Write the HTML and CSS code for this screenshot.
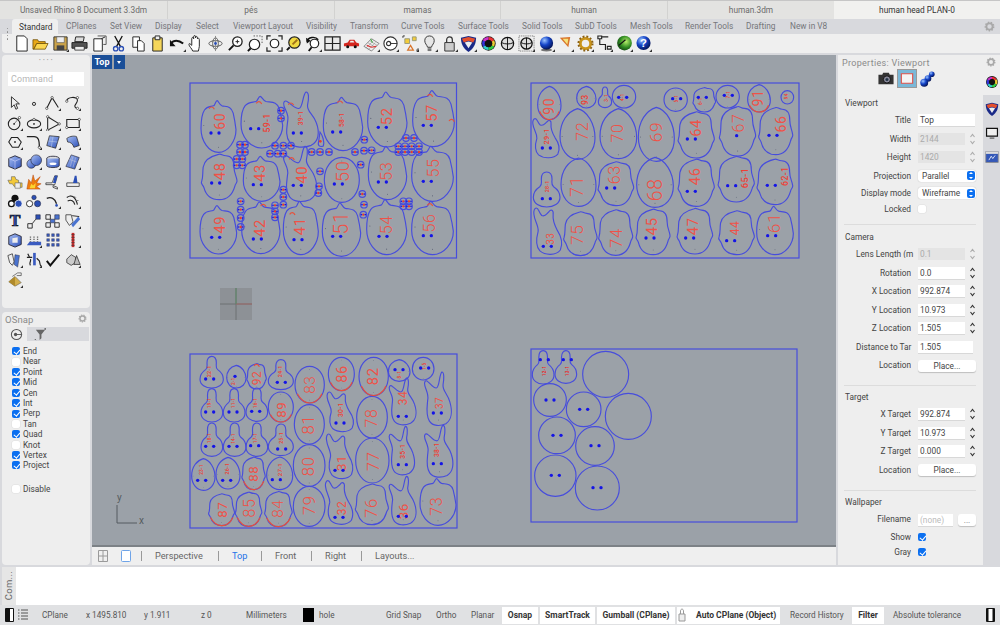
FILE: index.html
```html
<!DOCTYPE html>
<html lang="en">
<head>
<meta charset="utf-8">
<title>Rhino</title>
<link rel="stylesheet" href="styles.css">
</head>
<body>
<svg class="defs" width="0" height="0">
<defs>
<path id="fl" d="M18 15v3h-3z" fill="#333"/>
<g id="gear"><circle cx="6" cy="6" r="3.4" fill="none" stroke="#a9a9a9" stroke-width="2"/><circle cx="6" cy="6" r="4.6" fill="none" stroke="#a9a9a9" stroke-width="1.6" stroke-dasharray="1.6 1.6"/></g>
<g id="step"><path d="M1.5 4 3.5 1.5 5.5 4M1.5 8 3.5 10.5 5.5 8" fill="none" stroke="#333" stroke-width="1.1"/></g>
<g id="wheel" fill="none" stroke-width="2.8"><circle cx="9" cy="9" r="7.6" fill="#111" stroke="none"/><path d="M9 3.5a5.5 5.5 0 0 1 4.8 2.8" stroke="#e33"/><path d="M13.8 6.3a5.5 5.5 0 0 1 0 5.4" stroke="#ec3"/><path d="M13.8 11.700a5.500 5.500 0 0 1-4.800 2.800" stroke="#3c4"/><path d="M9 14.500a5.500 5.500 0 0 1-4.800-2.800" stroke="#3cc"/><path d="M4.200 11.700a5.500 5.500 0 0 1 0-5.400" stroke="#33d"/><path d="M4.200 6.300a5.500 5.500 0 0 1 4.800-2.800" stroke="#c3c"/></g>
<radialGradient id="bs" cx=".35" cy=".3" r=".8"><stop offset="0" stop-color="#9cc4ff"/><stop offset=".45" stop-color="#1444c8"/><stop offset="1" stop-color="#020a40"/></radialGradient>
<radialGradient id="gs" cx=".6" cy=".4" r=".8"><stop offset="0" stop-color="#b6ef6a"/><stop offset=".5" stop-color="#2f8a22"/><stop offset="1" stop-color="#06200a"/></radialGradient>
<linearGradient id="bl" x1="0" y1="0" x2="1" y2="1"><stop offset="0" stop-color="#a9c0f5"/><stop offset="1" stop-color="#2c50b8"/></linearGradient>

<g id="h1"><path class="o" d="M36 10C40 9 42 0 46 0C50 0 52 8 60 10C74 12 86 10 92 24C96 36 98 44 100 56C100 78 78 100 50 100C22 100 0 78 0 54C0 40 2 26 10 18C18 10 28 12 36 10Z"/><ellipse class="p" cx="50" cy="90" rx="1.200" ry="1"/><ellipse class="p" cx="8" cy="48" rx="1.200" ry="1"/></g>
<g id="h2"><path class="o" d="M50 0C78 4 100 30 100 58C100 82 78 100 50 100C22 100 0 80 0 55C0 25 22 6 50 0Z"/><ellipse class="p" cx="50" cy="92" rx="1.200" ry="1"/><ellipse class="p" cx="6" cy="55" rx="1.200" ry="1"/><ellipse class="p" cx="94" cy="55" rx="1.200" ry="1"/></g>
<g id="h7"><path class="o" d="M50 0C78 0 100 22 100 50C100 78 78 100 50 100C22 100 0 78 0 50C0 22 22 0 50 0Z"/><ellipse class="p" cx="50" cy="92" rx="1.200" ry="1"/><ellipse class="p" cx="50" cy="8" rx="1.200" ry="1"/></g>
<g id="h3"><path class="o" d="M62 0C70 0 70 12 66 24C64 36 82 40 90 56C100 74 96 90 76 97C56 102 30 102 18 92C4 80 10 64 12 52C16 42 6 34 2 26C-2 18 4 14 12 18C22 22 30 30 42 30C54 30 52 4 62 0Z"/><ellipse class="p" cx="50" cy="90" rx="1.200" ry="1"/></g>
<g id="h4"><path class="o" d="M50 0C62 0 70 8 70 20C70 32 66 36 76 42C92 50 100 60 100 72C100 90 76 100 50 100C24 100 0 90 0 72C0 60 8 50 24 42C34 36 30 32 30 20C30 8 38 0 50 0Z"/></g>
<g id="h5"><path class="o" d="M48 3C54 0 58 6 68 6C82 6 90 14 90 30C90 42 96 48 98 58C100 64 94 64 92 72C86 88 72 100 50 100C30 100 14 92 8 74C4 66-2 66 2 60C6 52 4 42 6 30C10 12 32 6 48 3Z"/><ellipse class="p" cx="50" cy="90" rx="1.200" ry="1"/></g>
<g id="h6"><path class="o" d="M10 0C18 0 18 10 28 16C40 20 44 12 52 8C58 2 68 4 66 14C64 26 70 36 80 48C94 62 98 78 90 90C76 102 40 102 22 92C8 82 10 64 16 50C18 38 4 28 2 14C0 6 4 0 10 0Z"/></g>
<path id="rb" class="r" d="M8 75C22 96 40 100 50 100C62 100 82 94 92 75"/>
<path id="rt" class="r" d="M-8 4C-4-2 4-4 8 6"/>
<g id="d"><circle class="b" r="5"/><circle class="b" cx="24" r="5"/></g>
<g id="c"><circle class="o" r="10"/><circle class="rd" r="3.500"/><circle class="b" cx="-6" r="2.500"/><circle class="b" cx="6" r="2.500"/></g>
</defs>
</svg>

<header class="doc-tabs">
<div class="doc-tab">Unsaved Rhino 8 Document 3.3dm</div>
<div class="doc-tab">pés</div>
<div class="doc-tab">mamas</div>
<div class="doc-tab">human</div>
<div class="doc-tab">human.3dm</div>
<div class="doc-tab active">human head PLAN-0</div>
</header>

<section class="toolbar">
<div class="tb-tabs">
<span class="cell"><span class="tb-on">Standard</span></span><span>CPlanes</span><span>Set View</span><span>Display</span><span>Select</span><span>Viewport Layout</span><span>Visibility</span><span>Transform</span><span>Curve Tools</span><span>Surface Tools</span><span>Solid Tools</span><span>SubD Tools</span><span>Mesh Tools</span><span>Render Tools</span><span>Drafting</span><span>New in V8</span>
<svg class="gear" viewBox="0 0 12 12"><use href="#gear"/></svg>
</div>
<div class="tb-icons">
<div class="grip"><i></i><i></i><i></i><i></i></div>
<svg class="ic" viewBox="0 0 18 18"><path d="M4 1h8l3 3v13H4z" fill="#fff" stroke="#222"/></svg>
<svg class="ic" viewBox="0 0 18 18"><path d="M1 15V5h5l1 2h7v2H5L2 15z" fill="#e8a818" stroke="#6a4a00" stroke-width=".8"/><path d="M2 15l3-6h12l-3 6z" fill="#fbd650" stroke="#6a4a00" stroke-width=".8"/></svg>
<svg class="ic" viewBox="0 0 18 18"><path d="M2 2h14v14H2z" fill="#c9a24a" stroke="#333"/><path d="M5 2h8v6H5z" fill="#eee" stroke="#555" stroke-width=".6"/><path d="M5 11h8v5H5z" fill="#444"/><use href="#fl"/></svg>
<svg class="ic" viewBox="0 0 18 18"><path d="M5 2h9l-1 5H4z" fill="#ddd" stroke="#222"/><path d="M1 8h16v6H1z" fill="#555" stroke="#222"/><path d="M4 12h10v4H4z" fill="#eee" stroke="#222" stroke-width=".8"/></svg>
<svg class="ic" viewBox="0 0 18 18"><path d="M3 4h9v13H3z" fill="#fff" stroke="#222"/><path d="M7 1h9v9h-3" fill="none" stroke="#555"/><path d="M11 4l4-2" stroke="#222"/></svg>
<svg class="ic" viewBox="0 0 18 18"><path d="M5 1l6 11M13 1L7 12" stroke="#111" stroke-width="1.400"/><circle cx="6" cy="14.500" r="2.300" fill="none" stroke="#2b4fb5" stroke-width="1.400"/><circle cx="12" cy="14.500" r="2.300" fill="none" stroke="#2b4fb5" stroke-width="1.400"/></svg>
<svg class="ic" viewBox="0 0 18 18"><path d="M3 2h7v11H3z" fill="#fff" stroke="#222"/><path d="M8 6h4l3 3v8H8z" fill="#fff" stroke="#222"/></svg>
<svg class="ic" viewBox="0 0 18 18"><path d="M4 3h10v14H4z" fill="#f5d65a" stroke="#222"/><path d="M6.500 1h5v4h-5z" fill="#eee" stroke="#222"/></svg>
<svg class="ic" viewBox="0 0 18 18"><path d="M2 9c3-4 8-4 13 0" fill="none" stroke="#111" stroke-width="2.200"/><path d="M1 5v7h6z" fill="#111"/><use href="#fl"/></svg>
<svg class="ic" viewBox="0 0 18 18"><path d="M5 17c-1-3-4-5-4-7s2 0 3 1V4c0-2 2-2 2 0V2c0-2 2-2 2 0v1c0-2 2-2 2 0v1c0-1 2-1 2 1v7c0 2-1 3-1 5z" fill="#fff" stroke="#222"/></svg>
<svg class="ic" viewBox="0 0 18 18"><ellipse cx="9" cy="9" rx="7" ry="3" fill="none" stroke="#555"/><ellipse cx="9" cy="9" rx="3" ry="6" fill="none" stroke="#555"/><path d="M9 1v16" stroke="#888"/><circle cx="9" cy="9" r="1.500" fill="#2b4fb5"/></svg>
<svg class="ic" viewBox="0 0 18 18"><circle cx="11" cy="7" r="5" fill="#fff" stroke="#222" stroke-width="1.400"/><path d="M7 11l-5 5" stroke="#111" stroke-width="2"/><path d="M9 7h4M11 5v4" stroke="#222"/></svg>
<svg class="ic" viewBox="0 0 18 18"><circle cx="9" cy="10" r="5.500" fill="#fff" stroke="#222" stroke-width="1.300"/><path d="M5 14l-3 3" stroke="#111" stroke-width="2"/><path d="M8 1h9v9" fill="none" stroke="#555" stroke-dasharray="1.500 1.500"/></svg>
<svg class="ic" viewBox="0 0 18 18"><circle cx="9" cy="9" r="4.500" fill="#fff" stroke="#222" stroke-width="1.300"/><path d="M1 5V1h4M13 1h4v4M17 13v4h-4M5 17H1v-4" fill="none" stroke="#222" stroke-width="1.300"/></svg>
<svg class="ic" viewBox="0 0 18 18"><circle cx="10" cy="8" r="6" fill="#f0d840" stroke="#222" stroke-width="1.300"/><path d="M8 10l5-5" stroke="#a0701a" stroke-width="2"/><path d="M5 13l-3 3" stroke="#111" stroke-width="2"/></svg>
<svg class="ic" viewBox="0 0 18 18"><circle cx="10" cy="9" r="4.500" fill="#fff" stroke="#222" stroke-width="1.300"/><path d="M2 7c1-5 9-6 12-2" fill="none" stroke="#111" stroke-width="1.500"/><path d="M1 3l1 6 4-3z" fill="#111"/><path d="M7 13l-3 4" stroke="#111" stroke-width="2"/><use href="#fl"/></svg>
<svg class="ic" viewBox="0 0 18 18"><path d="M1 2h16v14H1z" fill="#e8e8e8" stroke="#222" stroke-width="1.300"/><path d="M9 2v14M1 9h16" stroke="#222" stroke-width="1.300"/></svg>
<svg class="ic" viewBox="0 0 18 18"><path d="M1 12V9l4-1 2-3h5l2 3 3 1v3z" fill="#d4261e"/><circle cx="5" cy="12.500" r="1.600" fill="#111"/><circle cx="13" cy="12.500" r="1.600" fill="#111"/><path d="M8 6h3l1 2H7z" fill="#eee"/></svg>
<svg class="ic" viewBox="0 0 18 18"><path d="M1 12l8-8 8 5-8 8z" fill="#eee" stroke="#555" stroke-width=".7"/><path d="M5 8l8 5M7 6l8 5M5 16l8-8M3 14l8-8" stroke="#777" stroke-width=".5"/><path d="M4 11l5 2 5-1" fill="none" stroke="#d33" stroke-width="1.200"/><path d="M8 4l2 4" stroke="#3a3"/><use href="#fl"/></svg>
<svg class="ic" viewBox="0 0 18 18"><circle cx="9" cy="9" r="7" fill="#fff" stroke="#333" stroke-width="1.200"/><circle cx="7" cy="9" r="2.200" fill="none" stroke="#333" stroke-width="1.200"/><path d="M9 9h7" stroke="#333"/><use href="#fl"/></svg>
<svg class="ic" viewBox="0 0 18 18"><path d="M3 4h5v5H3z" fill="#f3cc3a" stroke="#997"/><path d="M11 2h4v4h-4z" fill="#f3cc3a" stroke="#997"/><path d="M9 11l3 5H6z" fill="none" stroke="#d9742a" stroke-width="1.300"/><path d="M1 3V1h2M15 16h2v-2" stroke="#333" fill="none"/><use href="#fl"/></svg>
<svg class="ic" viewBox="0 0 18 18"><path d="M9 1c3 0 5 2 5 5s-2 4-3 7H7C6 10 4 9 4 6s2-5 5-5z" fill="#e6e6e6" stroke="#333"/><path d="M7 14h4v3H7z" fill="#777"/><use href="#fl"/></svg>
<svg class="ic" viewBox="0 0 18 18"><path d="M4 8h10v9H4z" fill="#ccc" stroke="#333"/><path d="M6 8V5c0-4 6-4 6 0v3" fill="none" stroke="#333" stroke-width="1.300"/><use href="#fl"/></svg>
<svg class="ic" viewBox="0 0 18 18"><path d="M1 3l8-2 8 2c0 6-2 11-8 15C3 14 1 9 1 3z" fill="#1a2a88"/><path d="M2 4l7-2 7 2-2 4-5-2-5 2z" fill="#e5502c"/><path d="M5 8l4-1 4 1-4 6z" fill="#eee"/><use href="#fl"/></svg>
<svg class="ic" viewBox="0 0 18 18"><use href="#wheel"/></svg>
<svg class="ic" viewBox="0 0 18 18"><circle cx="9" cy="9" r="6.500" fill="#ddd" stroke="#111" stroke-width="1.300"/><path d="M2.500 8c4 2 9 2 13 0M9 2.500v13" fill="none" stroke="#111"/></svg>
<svg class="ic" viewBox="0 0 18 18"><path d="M1 1h16v16H1z" fill="none" stroke="#666" stroke-dasharray="1 1"/><circle cx="9" cy="9" r="6" fill="#ddd" stroke="#111" stroke-width="1.300"/><path d="M3 8c4 2 8 2 12 0M9 3v12" fill="none" stroke="#111"/><use href="#fl"/></svg>
<svg class="ic" viewBox="0 0 18 18"><circle cx="9" cy="8.500" r="7" fill="url(#bs)"/><ellipse cx="9" cy="16" rx="6" ry="1.500" fill="#222" opacity=".6"/><use href="#fl"/></svg>
<svg class="ic" viewBox="0 0 18 18"><path d="M3 3l11-1-2 11z" fill="#d9742a"/><path d="M6 4l6 0-1 6z" fill="#f5e27a"/><use href="#fl"/></svg>
<svg class="ic" viewBox="0 0 18 18"><circle cx="9" cy="9" r="5.500" fill="none" stroke="#c9941a" stroke-width="3"/><circle cx="9" cy="9" r="7.500" fill="none" stroke="#8a5f10" stroke-width="2" stroke-dasharray="2 2"/><circle cx="9" cy="9" r="2" fill="#eee"/><use href="#fl"/></svg>
<svg class="ic" viewBox="0 0 18 18"><path d="M2 1h4v3H2zM12 12h4v3h-4zM4 4v6h6v6M6 2h7" fill="none" stroke="#222" stroke-width="1.200"/><use href="#fl"/></svg>
<svg class="ic" viewBox="0 0 18 18"><circle cx="9" cy="8.500" r="7.800" fill="url(#gs)"/><path d="M3 11l7-6" stroke="#111" stroke-width="1.300"/><use href="#fl"/></svg>
<svg class="ic" viewBox="0 0 18 18"><circle cx="9" cy="8.500" r="7.500" fill="url(#bs)"/><text class="q" x="9" y="13">?</text><use href="#fl"/></svg>
</div>
</section>

<main class="main">
<aside class="left">
<div class="pane tools">
<div class="dots">• • • •</div>
<div class="cmd-in">Command</div>
<div class="tool-grid">
<svg class="ic" viewBox="0 0 18 18"><path d="M5 2v12l3-3 2 5 2-1-2-5h4z" fill="#eee" stroke="#222"/></svg>
<svg class="ic" viewBox="0 0 18 18"><circle cx="9" cy="10" r="1.800" fill="#ddd" stroke="#222"/></svg>
<svg class="ic" viewBox="0 0 18 18"><path d="M2 15 8 3l7 11" fill="none" stroke="#222" stroke-width="1.200"/><circle cx="8" cy="3" r="1.300" fill="#fff" stroke="#222" stroke-width=".7"/><circle cx="2" cy="15" r="1.300" fill="#fff" stroke="#222" stroke-width=".7"/><use href="#fl"/></svg>
<svg class="ic" viewBox="0 0 18 18"><path d="M2 7c0-5 12-6 12-1 0 4-6 6-1 9" fill="none" stroke="#222" stroke-width="1.200"/><circle cx="2" cy="7" r="1.300" fill="#fff" stroke="#222" stroke-width=".7"/><circle cx="14" cy="3" r="1.300" fill="#fff" stroke="#222" stroke-width=".7"/><circle cx="14" cy="15" r="1.300" fill="#fff" stroke="#222" stroke-width=".7"/><use href="#fl"/></svg>
<svg class="ic" viewBox="0 0 18 18"><circle cx="8" cy="10" r="6.500" fill="none" stroke="#222" stroke-width="1.200"/><circle cx="8" cy="10" r="1" fill="#222"/><path d="M8 10l6-7" stroke="#222" stroke-width=".6"/><circle cx="14" cy="3" r="1.300" fill="#fff" stroke="#222" stroke-width=".7"/><use href="#fl"/></svg>
<svg class="ic" viewBox="0 0 18 18"><ellipse cx="9" cy="10" rx="7.500" ry="4.500" fill="none" stroke="#222" stroke-width="1.200"/><circle cx="9" cy="10" r="1" fill="#222"/><circle cx="9" cy="5" r="1.300" fill="#fff" stroke="#222" stroke-width=".7"/><use href="#fl"/></svg>
<svg class="ic" viewBox="0 0 18 18"><path d="M3 2l13 8-13 7z" fill="none" stroke="#222" stroke-width="1.200"/><circle cx="3" cy="2" r="1.300" fill="#fff" stroke="#222" stroke-width=".7"/><circle cx="16" cy="10" r="1.300" fill="#fff" stroke="#222" stroke-width=".7"/><circle cx="3" cy="17" r="1.300" fill="#fff" stroke="#222" stroke-width=".7"/><use href="#fl"/></svg>
<svg class="ic" viewBox="0 0 18 18"><path d="M2 5h14v9H2z" fill="none" stroke="#222" stroke-width="1.200"/><circle cx="2" cy="14" r="1.300" fill="#fff" stroke="#222" stroke-width=".7"/><circle cx="16" cy="5" r="1.300" fill="#fff" stroke="#222" stroke-width=".7"/><use href="#fl"/></svg>
<svg class="ic" viewBox="0 0 18 18"><path d="M5 4h7l4 5-3 6H6L2 9z" fill="none" stroke="#222" stroke-width="1.200"/><circle cx="9" cy="9" r="1" fill="#222"/><use href="#fl"/></svg>
<svg class="ic" viewBox="0 0 18 18"><path d="M1 3h8c5 0 6 4 6 12" fill="none" stroke="#222" stroke-width="1.400"/><circle cx="15" cy="15" r="1.300" fill="#fff" stroke="#222" stroke-width=".7"/><use href="#fl"/></svg>
<svg class="ic" viewBox="0 0 18 18"><path d="M5 2l11 1-4 13-10-3z" fill="url(#bl)" stroke="#222" stroke-width=".8"/><path d="M4 8l10 1M9 3l-2 12" stroke="#cde" stroke-width=".5"/><use href="#fl"/></svg>
<svg class="ic" viewBox="0 0 18 18"><path d="M2 5c4-3 9-3 11-2l3 10-6 2C9 11 6 9 3 9z" fill="url(#bl)" stroke="#222" stroke-width=".8"/><use href="#fl"/></svg>
<svg class="ic" viewBox="0 0 18 18"><path d="M2 5l7-3 7 3v9l-7 3-7-3z" fill="url(#bl)" stroke="#223"/><path d="M2 5l7 3 7-3M9 8v9" fill="none" stroke="#ddf" stroke-width=".6"/></svg>
<svg class="ic" viewBox="0 0 18 18"><circle cx="6" cy="11" r="5" fill="url(#bl)" stroke="#223" stroke-width=".7"/><circle cx="11.500" cy="7" r="6" fill="url(#bl)" stroke="#223" stroke-width=".7"/><use href="#fl"/></svg>
<svg class="ic" viewBox="0 0 18 18"><ellipse cx="9" cy="5" rx="7" ry="2.500" fill="#ddd" stroke="#334"/><path d="M2 5v8c0 3 14 3 14 0V5" fill="url(#bl)" stroke="#334"/><ellipse cx="9" cy="11" rx="4" ry="1.500" fill="#fff"/><use href="#fl"/></svg>
<svg class="ic" viewBox="0 0 18 18"><path d="M7 1l9 3-5 13-10-3z" fill="url(#bl)" stroke="#223" stroke-width=".7"/><path d="M5 6l8 3M9 3l-3 11M12 4L9 15" stroke="#ccd" stroke-width=".5"/><use href="#fl"/></svg>
<svg class="ic" viewBox="0 0 18 18"><path d="M1 7h4V3h4l1 3 3 1v3h4v5h-5l-1-2-3 1-2-3H3z" fill="#f3c93a" stroke="#555" stroke-width=".6"/><path d="M9 10h6v6H9z" fill="#eee" stroke="#555" stroke-width=".6"/></svg>
<svg class="ic" viewBox="0 0 18 18"><path d="M1 17l2-11 3 4 2-9 2 7 6-5-4 7 5 1-5 3 4 3z" fill="#ee7d10" stroke="#b03a00" stroke-width=".5"/><path d="M4 16l2-5 2 2 3-3-1 6z" fill="#fbd430"/></svg>
<svg class="ic" viewBox="0 0 18 18"><path d="M1 10h7l3-8h3l-3 10H1z" fill="#eee" stroke="#222" stroke-width=".8"/><path d="M11 2h3l-2 8h-3z" fill="#2b4fb5"/><path d="M9 13l5 2v2l-5-2z" fill="#eee" stroke="#222" stroke-width=".8"/></svg>
<svg class="ic" viewBox="0 0 18 18"><path d="M2 10h14v4H2z" fill="#eee" stroke="#222" stroke-width=".8"/><path d="M9 10l2-8h2l1 8z" fill="#2b4fb5"/></svg>
<svg class="ic" viewBox="0 0 18 18"><circle cx="9" cy="6" r="4" fill="#111"/><circle cx="5" cy="12" r="4" fill="#111"/><circle cx="13" cy="12" r="4" fill="#2b4fb5" stroke="#fff" stroke-width=".8"/><circle cx="5" cy="12" r="2.500" fill="#fff"/></svg>
<svg class="ic" viewBox="0 0 18 18"><circle cx="9" cy="5" r="2.500" fill="#2b4fb5" stroke="#223" stroke-width=".6"/><circle cx="4" cy="12" r="3.500" fill="#fff" stroke="#222"/><circle cx="13" cy="12" r="3.500" fill="#2b4fb5" stroke="#223" stroke-width=".6"/></svg>
<svg class="ic" viewBox="0 0 18 18"><path d="M2 6c5-2 9 0 11 6" fill="none" stroke="#222" stroke-width="1.500"/><circle cx="13" cy="14" r="1.500" fill="#2b4fb5"/><use href="#fl"/></svg>
<svg class="ic" viewBox="0 0 18 18"><path d="M2 5c6-4 10 0 12 8M3 9c4-2 7 0 8 4" fill="none" stroke="#222" stroke-width="1.200"/><path d="M6 3l1 1M11 4l1 1M14 8l1 1" stroke="#222"/><use href="#fl"/></svg>
<svg class="ic" viewBox="0 0 18 18"><text class="tt" x="9" y="15">T</text></svg>
<svg class="ic" viewBox="0 0 18 18"><path d="M2 12h5v5H2z" fill="none" stroke="#222"/><path d="M11 2h5v5h-5z" fill="#2b4fb5" stroke="#223" stroke-width=".6"/><path d="M7 12l4-5" stroke="#222"/></svg>
<svg class="ic" viewBox="0 0 18 18"><path d="M1 2h5v5H1zM1 11h5v5H1zM11 11h5v5h-5z" fill="none" stroke="#222"/><path d="M11 2h5v5h-5zM6 7h5v4H6z" fill="#4a73cf" stroke="#223" stroke-width=".6"/></svg>
<svg class="ic" viewBox="0 0 18 18"><path d="M1 2h6l2 8-4 4-4-6z" fill="#eee" stroke="#222" stroke-width=".8"/><path d="M15 4l2 3-8 9-2-3z" fill="#4a73cf"/><path d="M8 3l8 1" stroke="#222"/><use href="#fl"/></svg>
<svg class="ic" viewBox="0 0 18 18"><path d="M2 5l7-3 7 3v9l-7 3-7-3z" fill="url(#bl)" stroke="#223"/><path d="M6 7l6-1v6H6z" fill="#eee"/></svg>
<svg class="ic" viewBox="0 0 18 18"><path d="M1 15l3-4h13v4z" fill="#3a5bc0"/><path d="M5 5v6M9 5v6M13 5v6" stroke="#666" stroke-width="1.500" stroke-dasharray="1.500 1"/><use href="#fl"/></svg>
<svg class="ic" viewBox="0 0 18 18"><path d="M2 2h3v3H2zM7.500 2h3v3h-3zM13 2h3v3h-3zM2 7.500h3v3H2zM7.500 7.500h3v3h-3zM13 7.500h3v3h-3zM2 13h3v3H2zM7.500 13h3v3h-3zM13 13h3v3h-3z" fill="#3a5bc0" stroke="#223" stroke-width=".4"/></svg>
<svg class="ic" viewBox="0 0 18 18"><path d="M9 1v16" stroke="#c92a2a" stroke-width="3"/><path d="M7 3h4M7 6h4M7 9h4M7 12h4M7 15h4" stroke="#333" stroke-width=".7"/><use href="#fl"/></svg>
<svg class="ic" viewBox="0 0 18 18"><path d="M1 4l5-2 2 9-2 4-3-3z" fill="#eee" stroke="#222" stroke-width=".8"/><path d="M9 3l5 1-2 13-4-3z" fill="#4a73cf" stroke="#223" stroke-width=".5"/><use href="#fl"/></svg>
<svg class="ic" viewBox="0 0 18 18"><path d="M8 1h3v14H8z" fill="#3a5bc0"/><path d="M1 6h6M2 2l2 4M12 7l3 3c1 2 0 4 2 6M5 8c1 3-2 4 0 7" fill="none" stroke="#222" stroke-width="1.300"/><use href="#fl"/></svg>
<svg class="ic" viewBox="0 0 18 18"><path d="M2 10l4 5L16 3" fill="none" stroke="#111" stroke-width="2.200"/></svg>
<svg class="ic" viewBox="0 0 18 18"><path d="M2 8l5-5 5 3v6l-5 3-5-3z" fill="#ccc" stroke="#222" stroke-width=".8"/><path d="M13 4l4 10h-7z" fill="#bbb" stroke="#222" stroke-width=".8"/><use href="#fl"/></svg>
<svg class="ic" viewBox="0 0 18 18"><path d="M9 5l7 7-7 4-7-5z" fill="#d3ae4a" stroke="#555" stroke-width=".6"/><path d="M9 5l-7 6 7 5z" fill="#b08a2a"/><path d="M6 5l6-4h4v3h-5" fill="#eee" stroke="#333" stroke-width=".7"/><use href="#fl"/></svg>
</div>
</div>
<div class="pane osnap">
<div class="pane-head">OSnap<svg class="gear" viewBox="0 0 12 12"><use href="#gear"/></svg></div>
<div class="os-tabs"><span class="os-on"><svg class="osic" viewBox="0 0 14 14"><circle cx="7" cy="7" r="5.500" fill="none" stroke="#555" stroke-width="1.100"/><circle cx="6" cy="7" r="1.800" fill="#555"/><path d="M6 7h7" stroke="#555"/></svg></span><span class="os-off"><svg class="osic" viewBox="0 0 14 14"><path d="M2 2h10L8 7v4l-2 2V7z" fill="#666"/><path d="M1 12l1 1M12 0v2" stroke="#333"/></svg></span></div>
<ul class="os-list">
<li><i class="cb on"></i>End</li><li><i class="cb"></i>Near</li><li><i class="cb on"></i>Point</li><li><i class="cb on"></i>Mid</li><li><i class="cb on"></i>Cen</li><li><i class="cb on"></i>Int</li><li><i class="cb on"></i>Perp</li><li><i class="cb"></i>Tan</li><li><i class="cb on"></i>Quad</li><li><i class="cb"></i>Knot</li><li><i class="cb on"></i>Vertex</li><li><i class="cb on"></i>Project</li>
<li class="dis"><i class="cb"></i>Disable</li>
</ul>
</div>
</aside>

<div class="view">
<div class="vp">
<div class="vp-tag"><b>Top</b><i></i></div>
<svg class="canvas" viewBox="92 55 744 492">
<g class="wid"><rect x="220" y="288" width="32" height="32" fill="#8d9196"/><path d="M236 288v32M220 304h32" stroke="#6d7073"/><path d="M236 304h16" stroke="#a06a6a"/><path d="M236 304v-16" stroke="#5f8a68"/></g>
<path d="M117 505v18h20" fill="none" stroke="#555b60"/><text class="axis" x="117" y="501">y</text><text class="axis" x="139" y="524">x</text>

<rect class="fr" x="190" y="83" width="266.500" height="175"/>
<rect class="fr" x="531" y="83" width="268" height="175"/>
<rect class="fr" x="190" y="354" width="267" height="174"/>
<rect class="fr" x="531" y="349" width="266" height="173"/>

<g transform="translate(185 78) scale(.33333)">
<use href="#h1" transform="translate(48 68) scale(1.050 1.550)"/><use href="#h1" transform="translate(168 55) scale(1.250 1.550)"/><use href="#h3" transform="translate(295 42) scale(1.100 1.650)"/><use href="#h1" transform="translate(415 58) scale(1.180 1.600)"/><use href="#h1" transform="translate(548 42) scale(1.180 1.650)"/><use href="#h1" transform="translate(683 38) scale(1.250 1.680)"/>
<use href="#h5" transform="translate(48 225) scale(1.100 1.400)"/><use href="#h1" transform="translate(175 235) scale(1.100 1.350)"/><use href="#h3" transform="translate(295 205) scale(1.050 1.650)"/><use href="#h7" transform="translate(418 238) scale(1.050 1.350)"/><use href="#h1" transform="translate(550 205) scale(1.150 1.600)"/><use href="#h1" transform="translate(680 205) scale(1.250 1.650)"/>
<use href="#h1" transform="translate(45 383) scale(1.100 1.450)"/><use href="#h1" transform="translate(170 372) scale(1.150 1.550)"/><use href="#h1" transform="translate(295 370) scale(1.050 1.600)"/><use href="#h1" transform="translate(412 375) scale(1.150 1.600)"/><use href="#h1" transform="translate(545 365) scale(1.200 1.650)"/><use href="#h1" transform="translate(680 370) scale(1.250 1.600)"/>
<use href="#rt" x="80" y="88"/><use href="#rt" x="222" y="72"/><use href="#rt" x="318" y="76"/><use href="#rt" x="465" y="70"/><use href="#rt" x="735" y="50"/><use href="#rt" x="320" y="240"/><use href="#rt" x="235" y="380"/><use href="#rt" x="322" y="405"/><use href="#rt" x="735" y="378"/><use href="#rt" x="800" y="125"/>
<text class="n" font-size="42" transform="translate(105 130) rotate(-90)">60</text><text class="n" font-size="26" transform="translate(247 135) rotate(-90)">59-1</text><text class="n" font-size="20" transform="translate(347 120) rotate(-90)">39-1</text><text class="n" font-size="20" transform="translate(472 125) rotate(-90)">58-1</text><text class="n" font-size="44" transform="translate(605 115) rotate(-90)">52</text><text class="n" font-size="44" transform="translate(740 105) rotate(-90)">57</text>
<text class="n" font-size="44" transform="translate(105 280) rotate(-90)">48</text><text class="n" font-size="44" transform="translate(225 285) rotate(-90)">43</text><text class="n" font-size="44" transform="translate(350 290) rotate(-90)">40</text><text class="n" font-size="54" transform="translate(472 280) rotate(-90)">50</text><text class="n" font-size="48" transform="translate(605 280) rotate(-90)">53</text><text class="n" font-size="48" transform="translate(745 270) rotate(-90)">55</text>
<text class="n" font-size="44" transform="translate(105 440) rotate(-90)">49</text><text class="n" font-size="44" transform="translate(225 450) rotate(-90)">42</text><text class="n" font-size="44" transform="translate(345 445) rotate(-90)">41</text><text class="n" font-size="58" transform="translate(470 435) rotate(-90)">51</text><text class="n" font-size="48" transform="translate(605 440) rotate(-90)">54</text><text class="n" font-size="48" transform="translate(735 435) rotate(-90)">56</text>
<use href="#d" x="78" y="165"/><use href="#d" x="197" y="152"/><use href="#d" x="325" y="165"/><use href="#d" x="443" y="162"/><use href="#d" x="580" y="148"/><use href="#d" x="715" y="142"/><use href="#d" x="80" y="315"/><use href="#d" x="205" y="320"/><use href="#d" x="325" y="322"/><use href="#d" x="448" y="318"/><use href="#d" x="580" y="312"/><use href="#d" x="715" y="310"/><use href="#d" x="80" y="478"/><use href="#d" x="205" y="483"/><use href="#d" x="327" y="485"/><use href="#d" x="443" y="475"/><use href="#d" x="582" y="475"/><use href="#d" x="715" y="473"/>
<use href="#c" x="288" y="98"/><use href="#c" x="288" y="121"/><use href="#c" x="165" y="200"/><use href="#c" x="180" y="200"/><use href="#c" x="165" y="222"/><use href="#c" x="180" y="222"/><use href="#c" x="155" y="243"/><use href="#c" x="172" y="243"/><use href="#c" x="155" y="262"/><use href="#c" x="172" y="262"/><use href="#c" x="270" y="203"/><use href="#c" x="295" y="203"/><use href="#c" x="318" y="203"/><use href="#c" x="255" y="227"/><use href="#c" x="278" y="227"/><use href="#c" x="295" y="227"/><use href="#c" x="380" y="222"/><use href="#c" x="405" y="222"/><use href="#c" x="432" y="222"/><use href="#c" x="538" y="185"/><use href="#c" x="510" y="222"/><use href="#c" x="537" y="218"/><use href="#c" x="560" y="217"/><use href="#c" x="527" y="260"/><use href="#c" x="663" y="180"/><use href="#c" x="687" y="180"/><use href="#c" x="640" y="205"/><use href="#c" x="660" y="205"/><use href="#c" x="680" y="205"/><use href="#c" x="702" y="205"/><use href="#c" x="640" y="222"/><use href="#c" x="660" y="222"/><use href="#c" x="680" y="222"/><use href="#c" x="702" y="222"/><use href="#c" x="655" y="370"/><use href="#c" x="672" y="370"/><use href="#c" x="655" y="385"/><use href="#c" x="672" y="385"/><use href="#c" x="295" y="335"/><use href="#c" x="295" y="357"/><use href="#c" x="295" y="380"/><use href="#c" x="270" y="382"/><use href="#c" x="270" y="400"/><use href="#c" x="270" y="418"/><use href="#c" x="167" y="370"/><use href="#c" x="167" y="395"/><use href="#c" x="167" y="420"/><use href="#c" x="167" y="447"/><use href="#c" x="402" y="325"/><use href="#c" x="400" y="345"/><use href="#c" x="532" y="348"/><use href="#c" x="537" y="380"/><use href="#c" x="535" y="410"/><use href="#c" x="405" y="280"/>
<path class="o" d="M405 162c8 10 14 30 10 42-10 4-18 0-14-14z"/><circle class="rd" cx="406" cy="190" r="4"/>
</g>

<g transform="translate(525 78) scale(.33333)">
<use href="#h2" transform="translate(38 25) scale(.700 1)"/><use href="#h2" transform="translate(155 25) scale(.580 .650)"/><use href="#h4" transform="translate(220 27) scale(.400 .620)"/><use href="#h7" transform="translate(262 22) scale(.700 .680)"/><use href="#h7" transform="translate(417 30) scale(.700 .700)"/><use href="#h5" transform="translate(503 27) scale(.700 .750)"/><use href="#h7" transform="translate(573 22) scale(.700 .680)"/><use href="#h2" transform="translate(668 20) scale(.680 .820)"/><use href="#h7" transform="translate(768 38) scale(.380 .400)"/>
<use href="#h6" transform="translate(22 122) scale(.850 1.180)"/><use href="#h2" transform="translate(105 92) scale(1.050 1.520)"/><use href="#h2" transform="translate(225 92) scale(1.100 1.500)"/><use href="#h2" transform="translate(340 88) scale(1.080 1.620)"/><use href="#h5" transform="translate(458 98) scale(1.120 1.420)"/><use href="#h5" transform="translate(582 82) scale(1.120 1.520)"/><use href="#h5" transform="translate(700 85) scale(1.050 1.450)"/>
<use href="#h4" transform="translate(25 282) scale(.800 1.050)"/><use href="#h2" transform="translate(108 240) scale(1.050 1.450)"/><use href="#h5" transform="translate(218 248) scale(1.100 1.350)"/><use href="#h2" transform="translate(335 238) scale(1.100 1.500)"/><use href="#h5" transform="translate(458 240) scale(1.120 1.450)"/><use href="#h5" transform="translate(578 232) scale(1.120 1.400)"/><use href="#h5" transform="translate(695 240) scale(1.100 1.400)"/>
<use href="#h6" transform="translate(25 390) scale(.900 1.400)"/><use href="#h5" transform="translate(115 398) scale(1.030 1.350)"/><use href="#h5" transform="translate(220 392) scale(1.050 1.400)"/><use href="#h5" transform="translate(332 390) scale(1.050 1.400)"/><use href="#h5" transform="translate(455 388) scale(1.100 1.400)"/><use href="#h5" transform="translate(580 395) scale(1.100 1.350)"/><use href="#h1" transform="translate(695 385) scale(1.100 1.450)"/>
<use href="#rb" transform="translate(38 25) scale(.700 1)"/><use href="#rb" transform="translate(668 20) scale(.680 .820)"/>
<text class="n" font-size="42" transform="translate(72 85) rotate(-90)">90</text><text class="n" font-size="26" transform="translate(180 65) rotate(-90)">93</text><text class="n" font-size="14" transform="translate(245 60) rotate(-90)">3-1</text><text class="n" font-size="42" transform="translate(700 60) rotate(-90)">91</text><text class="n" font-size="14" transform="translate(785 55) rotate(-90)">94</text><text class="n" font-size="14" transform="translate(293 58) rotate(-90)">4-1</text><text class="n" font-size="14" transform="translate(455 62) rotate(-90)">5-1</text><text class="n" font-size="14" transform="translate(527 70) rotate(-90)">6-1</text><text class="n" font-size="14" transform="translate(610 50) rotate(-90)">7-1</text>
<text class="n" font-size="22" transform="translate(65 175) rotate(-90)">29-1</text><text class="n" font-size="48" transform="translate(172 160) rotate(-90)">72</text><text class="n" font-size="48" transform="translate(278 165) rotate(-90)">70</text><text class="n" font-size="52" transform="translate(392 162) rotate(-90)">69</text><text class="n" font-size="44" transform="translate(512 150) rotate(-90)">64</text><text class="n" font-size="48" transform="translate(640 135) rotate(-90)">67</text><text class="n" font-size="42" transform="translate(768 138) rotate(-90)">66</text>
<text class="n" font-size="16" transform="translate(65 325) rotate(-90)">28-1</text><text class="n" font-size="54" transform="translate(155 325) rotate(-90)">71</text><text class="n" font-size="48" transform="translate(270 290) rotate(-90)">63</text><text class="n" font-size="58" transform="translate(392 335) rotate(-90)">68</text><text class="n" font-size="44" transform="translate(510 295) rotate(-90)">46</text><text class="n" font-size="28" transform="translate(660 300) rotate(-90)">65-1</text><text class="n" font-size="26" transform="translate(780 295) rotate(-90)">62-1</text>
<text class="n" font-size="30" transform="translate(78 482) rotate(-90)">33</text><text class="n" font-size="52" transform="translate(155 470) rotate(-90)">75</text><text class="n" font-size="50" transform="translate(275 480) rotate(-90)">74</text><text class="n" font-size="44" transform="translate(380 445) rotate(-90)">45</text><text class="n" font-size="44" transform="translate(505 445) rotate(-90)">47</text><text class="n" font-size="36" transform="translate(630 450) rotate(-90)">44</text><text class="n" font-size="50" transform="translate(750 435) rotate(-90)">61</text>
<use href="#d" x="281" y="58"/><use href="#d" x="443" y="62"/><use href="#d" x="520" y="58"/><use href="#d" x="598" y="52"/><use href="#d" x="52" y="210"/><use href="#d" x="487" y="183"/><circle class="b" cx="635" cy="173" r="5"/><use href="#d" x="732" y="172"/><use href="#d" x="52" y="362"/><use href="#d" x="245" y="330"/><use href="#d" x="487" y="340"/><use href="#d" x="608" y="323"/><use href="#d" x="727" y="322"/><use href="#d" x="55" y="505"/><use href="#d" x="363" y="480"/><use href="#d" x="482" y="480"/><use href="#d" x="605" y="488"/><use href="#d" x="728" y="473"/>
</g>

<g transform="translate(185 348) scale(.33333)">
<use href="#h4" transform="translate(45 25) scale(.700 .950)"/><use href="#h2" transform="translate(125 52) scale(.580 .680)"/><use href="#h5" transform="translate(185 45) scale(.600 .780)"/><use href="#h4" transform="translate(250 35) scale(.750 .900)"/><use href="#h7" transform="translate(330 55) scale(.880 1.100)"/><use href="#h7" transform="translate(430 28) scale(.780 1)"/><use href="#h7" transform="translate(522 28) scale(.880 1.150)"/><use href="#h2" transform="translate(610 35) scale(.650 .650)"/><use href="#h7" transform="translate(682 28) scale(.650 .680)"/>
<use href="#h4" transform="translate(48 122) scale(.650 1)"/><use href="#h4" transform="translate(115 122) scale(.650 1)"/><use href="#h4" transform="translate(183 120) scale(.650 1)"/><use href="#h7" transform="translate(250 132) scale(.750 .900)"/><use href="#h7" transform="translate(328 170) scale(.900 1.180)"/><use href="#h6" transform="translate(425 132) scale(.850 1.200)"/><use href="#h7" transform="translate(515 145) scale(.920 1.250)"/><use href="#h3" transform="translate(612 90) scale(.850 1.400)"/><use href="#h3" transform="translate(718 72) scale(.850 1.600)"/>
<use href="#h4" transform="translate(48 225) scale(.650 1)"/><use href="#h4" transform="translate(115 225) scale(.680 1)"/><use href="#h4" transform="translate(183 225) scale(.650 1)"/><use href="#h4" transform="translate(250 228) scale(.750 .950)"/><use href="#h7" transform="translate(325 290) scale(.950 1.250)"/><use href="#h6" transform="translate(423 258) scale(.850 1.350)"/><use href="#h7" transform="translate(512 270) scale(1 1.350)"/><use href="#h3" transform="translate(612 235) scale(.800 1.450)"/><use href="#h3" transform="translate(718 232) scale(.900 1.550)"/>
<use href="#h2" transform="translate(20 332) scale(.700 .950)"/><use href="#h2" transform="translate(93 328) scale(.720 .950)"/><use href="#h5" transform="translate(170 325) scale(.720 1)"/><use href="#h2" transform="translate(245 327) scale(.780 .980)"/><use href="#h5" transform="translate(70 435) scale(.800 .980)"/><use href="#h5" transform="translate(150 430) scale(.820 1.050)"/><use href="#h5" transform="translate(238 428) scale(.850 1.080)"/><use href="#h7" transform="translate(325 415) scale(.950 1.200)"/><use href="#h6" transform="translate(420 398) scale(.880 1.320)"/><use href="#h5" transform="translate(510 405) scale(1.020 1.250)"/><use href="#h3" transform="translate(612 385) scale(.850 1.450)"/><use href="#h1" transform="translate(705 392) scale(1.080 1.400)"/>
<use href="#rb" transform="translate(330 55) scale(.880 1.100)"/><use href="#rb" transform="translate(430 28) scale(.780 1)"/><use href="#rb" transform="translate(522 28) scale(.880 1.150)"/><use href="#rb" transform="translate(250 132) scale(.750 .900)"/><use href="#rb" transform="translate(170 325) scale(.720 1)"/><use href="#rb" transform="translate(70 435) scale(.800 .980)"/><use href="#rb" transform="translate(150 430) scale(.820 1.050)"/><use href="#rb" transform="translate(238 428) scale(.850 1.080)"/><use href="#rt" x="215" y="50"/>
<text class="n" font-size="16" transform="translate(72 70) rotate(-90)">22-1</text><text class="n" font-size="14" transform="translate(147 100) rotate(-90)">2-1</text><text class="n" font-size="36" transform="translate(215 90) rotate(-90)">92</text><text class="n" font-size="16" transform="translate(285 70) rotate(-90)">24-1</text><text class="n" font-size="46" transform="translate(375 110) rotate(-90)">83</text><text class="n" font-size="44" transform="translate(470 78) rotate(-90)">86</text><text class="n" font-size="44" transform="translate(565 85) rotate(-90)">82</text><text class="n" font-size="14" transform="translate(645 80) rotate(-90)">8-1</text><text class="n" font-size="14" transform="translate(718 55) rotate(-90)">1-5</text>
<text class="n" font-size="14" transform="translate(75 165) rotate(-90)">19-1</text><text class="n" font-size="14" transform="translate(147 165) rotate(-90)">11-1</text><text class="n" font-size="14" transform="translate(213 165) rotate(-90)">16-1</text><text class="n" font-size="40" transform="translate(290 185) rotate(-90)">89</text><text class="n" font-size="50" transform="translate(372 230) rotate(-90)">81</text><text class="n" font-size="20" transform="translate(467 185) rotate(-90)">30-1</text><text class="n" font-size="48" transform="translate(560 210) rotate(-90)">78</text><text class="n" font-size="36" transform="translate(655 150) rotate(-90)">34</text><text class="n" font-size="30" transform="translate(765 165) rotate(-90)">37</text>
<text class="n" font-size="14" transform="translate(75 270) rotate(-90)">18-1</text><text class="n" font-size="14" transform="translate(147 272) rotate(-90)">14-1</text><text class="n" font-size="14" transform="translate(213 270) rotate(-90)">17-1</text><text class="n" font-size="16" transform="translate(288 270) rotate(-90)">25-1</text><text class="n" font-size="50" transform="translate(372 355) rotate(-90)">80</text><text class="n" font-size="40" transform="translate(470 345) rotate(-90)">31</text><text class="n" font-size="50" transform="translate(565 340) rotate(-90)">77</text><text class="n" font-size="20" transform="translate(655 310) rotate(-90)">35-1</text><text class="n" font-size="20" transform="translate(757 305) rotate(-90)">38-1</text>
<text class="n" font-size="14" transform="translate(50 365) rotate(-90)">23-1</text><text class="n" font-size="16" transform="translate(125 362) rotate(-90)">26-1</text><text class="n" font-size="40" transform="translate(207 377) rotate(-90)">88</text><text class="n" font-size="18" transform="translate(285 365) rotate(-90)">27-1</text><text class="n" font-size="40" transform="translate(113 485) rotate(-90)">87</text><text class="n" font-size="48" transform="translate(195 480) rotate(-90)">85</text><text class="n" font-size="46" transform="translate(280 482) rotate(-90)">84</text><text class="n" font-size="50" transform="translate(375 472) rotate(-90)">79</text><text class="n" font-size="36" transform="translate(470 480) rotate(-90)">32</text><text class="n" font-size="50" transform="translate(560 480) rotate(-90)">76</text><text class="n" font-size="40" transform="translate(655 490) rotate(-90)">36</text><text class="n" font-size="48" transform="translate(755 475) rotate(-90)">73</text>
<use href="#d" x="62" y="93"/><circle class="b" cx="150" cy="85" r="5"/><use href="#d" x="277" y="103"/><use href="#d" x="630" y="65"/><use href="#d" x="707" y="60"/><use href="#d" x="62" y="192"/><use href="#d" x="132" y="192"/><use href="#d" x="200" y="190"/><use href="#d" x="453" y="225"/><use href="#d" x="640" y="205"/><use href="#d" x="745" y="195"/><use href="#d" x="62" y="295"/><use href="#d" x="132" y="295"/><use href="#d" x="197" y="293"/><use href="#d" x="278" y="303"/><use href="#d" x="450" y="367"/><use href="#d" x="640" y="350"/><use href="#d" x="745" y="347"/><use href="#d" x="38" y="397"/><use href="#d" x="113" y="397"/><use href="#d" x="262" y="395"/><use href="#d" x="450" y="508"/><use href="#d" x="640" y="505"/>
</g>

<g transform="translate(525 345) scale(.33333)">
<use href="#h4" transform="translate(22 17) scale(.650 1)"/><use href="#h4" transform="translate(90 17) scale(.650 .980)"/>
<circle class="o" cx="242" cy="88" r="69"/><circle class="o" cx="75" cy="165" r="49"/><circle class="o" cx="176" cy="193" r="52"/><circle class="o" cx="310" cy="214" r="69"/><circle class="o" cx="96" cy="271" r="55"/><circle class="o" cx="210" cy="303" r="58"/><circle class="o" cx="91" cy="392" r="62"/><circle class="o" cx="217" cy="429" r="66"/>
<use href="#d" x="46" y="44"/><use href="#d" x="115" y="44"/><use href="#d" x="63" y="165"/><use href="#d" x="164" y="193"/><use href="#d" x="84" y="271"/><use href="#d" x="198" y="302"/><use href="#d" x="79" y="391"/><use href="#d" x="204" y="428"/>
<text class="n red" font-size="14" transform="translate(58 78) rotate(-90)">12-1</text><text class="n red" font-size="14" transform="translate(128 78) rotate(-90)">13-1</text>
</g>
</svg>
</div>
<nav class="view-tabs">
<svg class="vt-ic" viewBox="0 0 10 12"><path d="M.5 .5h9v11h-9zM5 .5v11M.5 6h9" fill="none" stroke="#9a9a9a"/></svg>
<svg class="vt-ic" viewBox="0 0 10 12"><rect x=".5" y=".5" width="9" height="11" rx="1" fill="#fff" stroke="#6fa4e8"/></svg>
<i></i><span>Perspective</span><i></i><span class="vt-on">Top</span><i></i><span>Front</span><i></i><span>Right</span><i></i><span>Layouts...</span>
</nav>
</div>

<aside class="right">
<div class="r-head">Properties: Viewport<svg class="gear" viewBox="0 0 12 12"><use href="#gear"/></svg></div>
<div class="r-wrap">
<div class="r-body">
<div class="r-icons">
<span class="ri"><svg viewBox="0 0 18 18"><path d="M1 5h4l1-2h6l1 2h4v10H1z" fill="#333"/><circle cx="10" cy="10" r="3.800" fill="#889" stroke="#111"/><circle cx="10" cy="10" r="1.600" fill="#234"/></svg></span>
<span class="ri sel"><svg viewBox="0 0 18 18"><path d="M3 4h12v10H3z" fill="#f4f4f4" stroke="#e0524a" stroke-width="1.200"/></svg></span>
<span class="ri"><svg viewBox="0 0 18 18"><circle cx="13" cy="4.500" r="3" fill="url(#bs)"/><circle cx="9" cy="9" r="3.500" fill="url(#bs)"/><circle cx="5" cy="13.500" r="4.200" fill="url(#bs)"/></svg></span>
</div>
<section class="sec">
<h4>Viewport</h4>
<div class="row"><label>Title</label><span class="inp wide">Top</span></div>
<div class="row"><label>Width</label><span class="inp dis">2144</span><svg class="st dim" viewBox="0 0 7 12"><use href="#step"/></svg></div>
<div class="row"><label>Height</label><span class="inp dis">1420</span><svg class="st dim" viewBox="0 0 7 12"><use href="#step"/></svg></div>
<div class="row r18"><label>Projection</label><span class="sel-box">Parallel<b></b></span></div>
<div class="row r17"><label>Display mode</label><span class="sel-box">Wireframe<b></b></span></div>
<div class="row r14"><label>Locked</label><i class="cb"></i></div>
</section>
<section class="sec">
<h4>Camera</h4>
<div class="row"><label class="clip">Lens Length (m</label><span class="inp dis">0.1</span><svg class="st dim" viewBox="0 0 7 12"><use href="#step"/></svg></div>
<div class="row"><label>Rotation</label><span class="inp">0.0</span><svg class="st" viewBox="0 0 7 12"><use href="#step"/></svg></div>
<div class="row"><label>X Location</label><span class="inp">992.874</span><svg class="st" viewBox="0 0 7 12"><use href="#step"/></svg></div>
<div class="row"><label>Y Location</label><span class="inp">10.973</span><svg class="st" viewBox="0 0 7 12"><use href="#step"/></svg></div>
<div class="row"><label>Z Location</label><span class="inp">1.505</span><svg class="st" viewBox="0 0 7 12"><use href="#step"/></svg></div>
<div class="row"><label class="clip">Distance to Tar</label><span class="inp mid">1.505</span></div>
<div class="row"><label>Location</label><span class="btn">Place...</span></div>
</section>
<section class="sec tgt">
<h4>Target</h4>
<div class="row"><label>X Target</label><span class="inp">992.874</span><svg class="st" viewBox="0 0 7 12"><use href="#step"/></svg></div>
<div class="row"><label>Y Target</label><span class="inp">10.973</span><svg class="st" viewBox="0 0 7 12"><use href="#step"/></svg></div>
<div class="row"><label>Z Target</label><span class="inp">0.000</span><svg class="st" viewBox="0 0 7 12"><use href="#step"/></svg></div>
<div class="row"><label>Location</label><span class="btn">Place...</span></div>
</section>
<section class="sec last">
<h4>Wallpaper</h4>
<div class="row"><label>Filename</label><span class="inp short dis2">(none)</span><span class="btn dots-b">...</span></div>
<div class="row r16"><label>Show</label><i class="cb on"></i></div>
<div class="row r15"><label>Gray</label><i class="cb on"></i></div>
</section>
</div>
<div class="r-strip">
<svg class="rs top" viewBox="0 0 18 18"><use href="#wheel"/></svg>
<svg class="rs" viewBox="0 0 18 18"><path d="M1 3l8-2 8 2c0 6-2 11-8 15C3 14 1 9 1 3z" fill="#1a2a88"/><path d="M2 4l7-2 7 2-2 4-5-2-5 2z" fill="#e5502c"/><path d="M5 8l4-1 4 1-4 6z" fill="#eee"/></svg>
<svg class="rs" viewBox="0 0 18 18"><path d="M2 3h14v10H2z" fill="#eee" stroke="#111" stroke-width="1.500"/><path d="M6 15h6v1H6z" fill="#111"/></svg>
<svg class="rs" viewBox="0 0 18 18"><path d="M1 2h16v14H1z" fill="#3458b8" stroke="#888"/><path d="M1 2h16v3H1z" fill="#ddd"/><path d="M5 13l3-5 2 3 3-4" fill="none" stroke="#fff"/></svg>
</div>
</div>
</aside>
</main>

<section class="cmdline"><div class="com"><span>Com...</span></div><div class="cmd-area"></div></section>

<footer class="status">
<svg class="st-ic" viewBox="0 0 9 14"><path d="M.5 .5h8v13h-8z" fill="#fff" stroke="#111"/><path d="M1 1h4v12H1z" fill="#111"/></svg>
<svg class="st-ic2" viewBox="0 0 10 14"><path d="M3 2h7M3 5h7M3 8h7M3 11h7" stroke="#555"/><path d="M0 2h1.500M0 5h1.500M0 8h1.500M0 11h1.500" stroke="#555"/></svg>
<span>CPlane</span><span>x 1495.810</span><span>y 1.911</span><span>z 0</span><span>Millimeters</span><i class="swatch"></i><span>hole</span><span>Grid Snap</span><span>Ortho</span><span>Planar</span><span class="on">Osnap</span><span class="on">SmartTrack</span><span class="on">Gumball (CPlane)</span><span class="on lock"><svg class="lk" viewBox="0 0 8 14"><path d="M1 6h6v7H1z" fill="#eee" stroke="#999"/><path d="M2.500 6V3c0-2.500 3-2.500 3 0v3" fill="none" stroke="#999"/></svg>Auto CPlane (Object)</span><span>Record History</span><span class="on">Filter</span><span>Absolute tolerance</span>
<svg class="st-ic" viewBox="0 0 9 14"><path d="M.5 .5h8v13h-8z" fill="#fff" stroke="#111"/><path d="M1 1h1.500v12H1zM6.500 1H8v12H6.500z" fill="#111"/></svg>
</footer>
</body>
</html>
```

FILE: styles.css
```css
* { box-sizing: border-box; }
html, body { margin: 0; padding: 0; }
body {
  width: 1000px; height: 625px; overflow: hidden;
  background: #d8d9dd;
  font: 8.300px/1 Roboto, "Liberation Sans", sans-serif;
  color: #444;
  display: flex; flex-direction: column;
  position: relative;
}
.defs { position: absolute; }
i { font-style: normal; display: block; }

.doc-tabs { height: 19px; flex: none; display: grid; grid-template-columns: 167px 167px 166px 167px 167px 166px; background: #e3e3e1; border-top: 1px solid #c6c6c6; }
.doc-tab { display: flex; align-items: center; justify-content: center; color: #6b6b6b; font-size: 8.300px; border-left: 1px solid #d2d2d0; }
.doc-tab:first-child { border-left: 0; }
.doc-tab.active { background: #f1f1ef; color: #333; border-left: 0; }

.toolbar { height: 35px; flex: none; margin-left: 2px; }
.tb-tabs { height: 15px; margin-left: 10px; display: grid; grid-template-columns: 54px 44px 45px 41px 37px 73px 44px 51px 57px 64px 53px 55px 55px 61px 44px 194px 12px; align-items: center; color: #75767a; font-size: 8.300px; background: #d8d9dd; white-space: nowrap; }
.cell { display: block; }
.tb-on { display: block; width: 46px; height: 15px; line-height: 16px; padding-left: 7px; background: #efefef; color: #333; border-radius: 3px 3px 0 0; }
.tb-icons { height: 19px; background: #efefef; display: flex; align-items: center; border-radius: 0 0 0 4px; }
.tb-tabs .gear { width: 11px; height: 11px; }
.grip { width: 11px; height: 20px; margin-top: -12px; display: flex; flex-direction: column; align-items: center; gap: 2px; }
.grip i { width: 1.500px; height: 1.500px; background: #888; border-radius: 50%; }
.ic { width: 16px; height: 16px; flex: none; display: block; }
.tb-icons .ic { width: 17px; height: 17px; margin-right: 2.440px; }

.main { flex: 1; min-height: 0; display: flex; gap: 2px; padding: 1px 0 2px 2px; }
.left { width: 88px; flex: none; display: flex; flex-direction: column; gap: 4px; }
.pane { background: #eeeeee; border-radius: 4px; height: 253px; }
.dots { text-align: center; font-size: 5px; color: #999; height: 17px; line-height: 11px; letter-spacing: .5px; }
.cmd-in { margin: 0 6px; height: 14px; background: #fff; color: #b5b5b5; font-size: 8.800px; line-height: 14px; padding-left: 3px; letter-spacing: .2px; }
.tool-grid { display: grid; grid-template-columns: repeat(4, 19.400px); grid-auto-rows: 19.600px; margin: 7.500px 0 0 3px; justify-items: center; align-items: center; }
.pane-head { height: 15px; position: relative; padding: 2px 0 0 3px; font-size: 9.500px; color: #8a8a8a; letter-spacing: .1px; line-height: 12px; }
.pane-head .gear { position: absolute; right: 3px; top: 2px; width: 9px; height: 9px; }
.os-tabs { height: 14px; display: flex; background: #d8d9dd; margin-right: 1px; }
.os-on { width: 22px; margin-left: 3px; background: #eeeeee; display: flex; justify-content: center; align-items: center; box-shadow: -3px 0 0 #eeeeee; }
.os-off { flex: 1; display: flex; align-items: center; padding-left: 7px; }
.osic { width: 13px; height: 13px; }
.os-list { list-style: none; margin: 5px 0 0; padding: 0 0 0 10px; color: #444; }
.os-list li { height: 10.400px; display: flex; align-items: center; gap: 3px; }
.os-list .dis { margin-top: 12.800px; }
.cb { width: 8px; height: 8px; flex: none; border-radius: 2px; background: #fff; box-shadow: 0 0 0 .5px #ddd; position: relative; }
.cb.on { background: #0b6ff0; box-shadow: none; }
.cb.on::after { content: ""; position: absolute; left: 2.600px; top: .600px; width: 2.500px; height: 5px; border: solid #fff; border-width: 0 1.200px 1.200px 0; transform: rotate(40deg); }

.view { width: 744px; flex: none; display: flex; flex-direction: column; }
.vp { height: 492px; background: #9ba1a8; position: relative; border-bottom: 2px solid #7c8186; }
.canvas { display: block; width: 744px; height: 492px; }
.vp-tag { position: absolute; left: 0; top: 0; display: flex; gap: 2px; height: 14px; }
.vp-tag b { width: 20px; background: #1b4f98; color: #fff; font-size: 9px; font-weight: 700; text-align: center; line-height: 14px; }
.vp-tag i { width: 11px; background: #1b4f98; position: relative; }
.vp-tag i::after { content: ""; position: absolute; left: 3px; top: 6px; border: 2.500px solid transparent; border-top: 3px solid #fff; border-bottom: 0; }
.view-tabs { flex: 1; background: #efefef; display: grid; grid-template-columns: 23px 20px 14px 63px 14px 29px 14px 36px 14px 36px 14px auto; align-items: center; padding-left: 6px; color: #666; font-size: 9.200px; white-space: nowrap; }
.view-tabs i { width: 1px; height: 10px; background: #999; }
.vt-ic { width: 10px; height: 12px; }
.vt-on { color: #2474e8; }

.o { fill: none; stroke: #474ddc; stroke-width: 1.150; vector-effect: non-scaling-stroke; }
.r { fill: none; stroke: #e8503a; stroke-width: 1.200; vector-effect: non-scaling-stroke; }
.p { fill: #565c70; }
.b { fill: #1414e6; }
.rd { fill: #ea3a2a; }
.fr { fill: none; stroke: #474ddc; stroke-width: 1.200; }
.n { fill: #ee5248; font-family: Roboto, "Liberation Sans", sans-serif; font-weight: 300; text-anchor: middle; dominant-baseline: central; letter-spacing: .04em; }
.n[font-size="14"], .n[font-size="16"], .n[font-size="18"], .n[font-size="20"], .n[font-size="22"], .n[font-size="26"], .n[font-size="28"] { font-weight: 500; fill: #ef3e34; }
.n[font-size="30"], .n[font-size="36"], .n[font-size="40"], .n[font-size="42"], .n[font-size="44"] { font-weight: 400; }
.n.red { fill: #f01a1a; font-weight: 500; }
.axis { fill: #555b60; font: 10px Roboto, sans-serif; }
.q { fill: #fff; font: 700 12px "Liberation Sans", sans-serif; text-anchor: middle; }
.tt { fill: #2b4fb5; stroke: #111; stroke-width: .8; font: 700 18px "Liberation Serif", serif; text-anchor: middle; }

.right { flex: 1; min-width: 0; display: flex; flex-direction: column; background: #eeeeee; }
.r-head { height: 14px; position: relative; padding: 3px 0 0 4px; font-size: 9px; line-height: 11px; color: #8a8a8a; letter-spacing: .3px; flex: none; }
.r-head .gear { position: absolute; right: 4px; top: 2px; width: 10px; height: 10px; }
.r-wrap { flex: 1; display: flex; min-height: 0; }
.r-body { width: 145px; flex: none; }
.r-strip { flex: 1; display: flex; flex-direction: column; align-items: center; background: linear-gradient(#eeeeee 26px, #d8d9dd 26px); padding-top: 4px; gap: 7px; }
.rs { width: 14px; height: 14px; flex: none; margin-top: 3px; }
.rs.top { margin: 2px 0 3px; }
.r-icons { height: 26px; display: flex; justify-content: center; gap: 3px; padding: 1px 7px 0 0; }
.ri { width: 18px; height: 17px; display: flex; }
.ri svg { width: 18px; height: 17px; }
.ri.sel { background: #7ab8d8; outline: 1px solid #999; }
.sec { margin: 0 7px 0 6px; border-bottom: 1px solid #dcdcdc; padding-bottom: 8.500px; }
.sec + .sec { padding-top: 3.500px; padding-bottom: 10.500px; }
.sec.tgt { padding-top: 2.500px; padding-bottom: 11px; }
.sec.last { padding-top: 3px; border: 0; }
.sec h4 { margin: 0; height: 16px; line-height: 16px; font-weight: 400; font-size: 8.300px; color: #444; padding-left: 1px; }
.row { height: 18.600px; display: flex; align-items: center; gap: 7px; }
.row.r18 { height: 18px; }
.row.r17 { height: 17px; }
.row.r16 { height: 16px; }
.row.r15 { height: 15px; }
.row.r14 { height: 14px; }
.row label { width: 67px; flex: none; text-align: right; white-space: nowrap; overflow: hidden; color: #444; }
.row label.clip { width: 59px; margin-left: 12px; margin-right: -4px; text-align: left; }
.inp { width: 47px; height: 12px; background: #fff; color: #444; padding-left: 2px; line-height: 12px; box-shadow: 0 1px 0 #d8d8d8; }
.inp.wide { width: 57px; }
.inp.mid { width: 55px; }
.inp.short { width: 35px; }
.inp.dis { background: #e4e4e4; color: #aaa; box-shadow: none; }
.inp.dis2 { color: #bbb; }
.st { width: 7px; height: 12px; margin-left: -3px; flex: none; }
.st.dim { opacity: .35; }
.sel-box { width: 58px; height: 12px; background: #fff; border-radius: 3px; padding-left: 4px; line-height: 12px; color: #444; position: relative; box-shadow: 0 0 1px rgba(0,0,0,.3); }
.sel-box b { position: absolute; right: 1px; top: 1.500px; width: 8px; height: 9px; background: #0b6ff0; border-radius: 2px; }
.sel-box b::before, .sel-box b::after { content: ""; position: absolute; left: 2px; border: 2px solid transparent; }
.sel-box b::before { top: 1px; border-bottom: 2.500px solid #fff; border-top: 0; }
.sel-box b::after { bottom: 1px; border-top: 2.500px solid #fff; border-bottom: 0; }
.btn { width: 58px; height: 12px; background: #fff; border-radius: 3px; text-align: center; line-height: 12px; color: #444; box-shadow: 0 1px 1px rgba(0,0,0,.2); }
.btn.dots-b { width: 18px; margin-left: -2px; color: #777; }

.cmdline { height: 38px; flex: none; display: flex; margin-left: 2px; }
.com { width: 14px; background: #e6e6e6; display: flex; align-items: center; justify-content: center; color: #666; font-size: 9.500px; }
.com span { writing-mode: vertical-rl; transform: rotate(180deg); letter-spacing: .3px; }
.cmd-area { flex: 1; background: #fff; }

.status { height: 20px; flex: none; display: grid; grid-template-columns: 13px 24px 44px 58px 57px 45px 57px 16px 67px 50px 35px 31px 38px 57px 80px 113px 62px 41px 93px 9px; align-items: center; padding-left: 5px; color: #555; font-size: 8.200px; white-space: nowrap; background: #e0e1e3; }
.status .on { background: #fff; color: #333; font-weight: 700; font-size: 8.500px; height: 17px; line-height: 17px; text-align: center; margin-right: 2px; display: block; }
.status .lock { display: flex; align-items: center; padding-left: 1px; gap: 10px; justify-content: flex-start; margin-right: 0; width: 103px; }
.status .on:nth-last-child(3) { width: 32px; }
.lk { width: 8px; height: 14px; flex: none; }
.st-ic { width: 9px; height: 14px; }
.st-ic2 { width: 10px; height: 14px; }
.swatch { width: 11px; height: 14px; background: #000; }
```
